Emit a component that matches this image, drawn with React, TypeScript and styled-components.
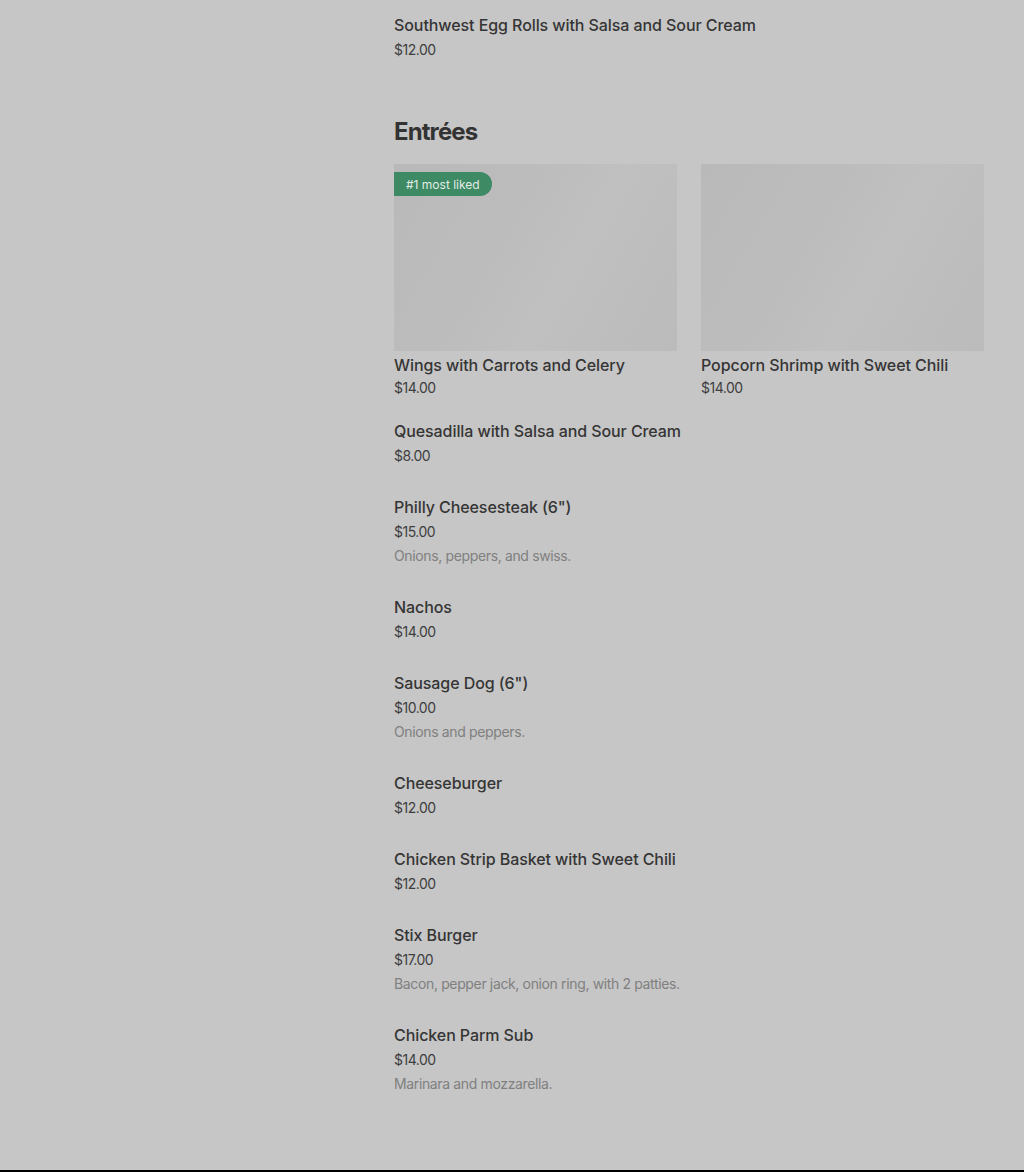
import styled, { createGlobalStyle } from "styled-components"

const GlobalStyle = createGlobalStyle`
	html, body {
		margin: 0;
		padding: 0;
		background: #c6c6c6;
	}
	body {
		font-family: Inter, "Noto Sans", sans-serif;
		color: #353535;
	}
	* {
		box-sizing: border-box;
	}
`

interface MenuItem {
	name: string
	price: string
	description?: string
}

interface FeaturedItem {
	name: string
	price: string
	badge?: string
}

const featured: FeaturedItem[] = [
	{ name: "Wings with Carrots and Celery", price: "$14.00", badge: "#1 most liked" },
	{ name: "Popcorn Shrimp with Sweet Chili", price: "$14.00" },
]

const entrees: MenuItem[] = [
	{ name: "Quesadilla with Salsa and Sour Cream", price: "$8.00" },
	{
		name: 'Philly Cheesesteak (6")',
		price: "$15.00",
		description: "Onions, peppers, and swiss.",
	},
	{ name: "Nachos", price: "$14.00" },
	{
		name: 'Sausage Dog (6")',
		price: "$10.00",
		description: "Onions and peppers.",
	},
	{ name: "Cheeseburger", price: "$12.00" },
	{ name: "Chicken Strip Basket with Sweet Chili", price: "$12.00" },
	{
		name: "Stix Burger",
		price: "$17.00",
		description: "Bacon, pepper jack, onion ring, with 2 patties.",
	},
	{
		name: "Chicken Parm Sub",
		price: "$14.00",
		description: "Marinara and mozzarella.",
	},
]

const App = () => {
	return (
		<>
			<GlobalStyle />
			<Page>
				<Sidebar />
				<Menu>
					<Item>
						<ItemName>Southwest Egg Rolls with Salsa and Sour Cream</ItemName>
						<ItemPrice>$12.00</ItemPrice>
					</Item>

					<Section>
						<SectionTitle>Entrées</SectionTitle>
						<CardGrid>
							{featured.map((item) => (
								<Card key={item.name}>
									<CardImage>
										{item.badge && <Badge>{item.badge}</Badge>}
									</CardImage>
									<CardName>{item.name}</CardName>
									<CardPrice>{item.price}</CardPrice>
								</Card>
							))}
						</CardGrid>
						<ItemList>
							{entrees.map((item) => (
								<Item key={item.name}>
									<ItemName>{item.name}</ItemName>
									<ItemPrice>{item.price}</ItemPrice>
									{item.description && (
										<ItemDescription>{item.description}</ItemDescription>
									)}
								</Item>
							))}
						</ItemList>
					</Section>
				</Menu>
			</Page>
			<Footer />
		</>
	)
}

export default App

const Page = styled.main`
	display: grid;
	grid-template-columns: 330px 590px;
	column-gap: 24px;
	padding: 13px 40px 76px;
`

const Sidebar = styled.aside``

const Menu = styled.div`
	display: flex;
	flex-direction: column;
`

const Section = styled.section`
	margin-top: 56px;
`

const SectionTitle = styled.h2`
	margin: 0 0 16px;
	font-size: 24px;
	line-height: 32px;
	font-weight: 700;
	letter-spacing: -0.9px;
	color: #333;
`

const CardGrid = styled.div`
	display: grid;
	grid-template-columns: 1fr 1fr;
	column-gap: 24px;
`

const Card = styled.div`
	display: flex;
	flex-direction: column;
`

const CardImage = styled.div`
	position: relative;
	height: 187px;
	background: linear-gradient(
		120deg,
		#b9b9b9 0%,
		#bcbcbc 35%,
		#c0c0c0 60%,
		#bbbbbb 100%
	);
`

const Badge = styled.span`
	position: absolute;
	top: 8px;
	left: 0;
	height: 24px;
	padding: 0 12px;
	display: flex;
	align-items: center;
	background: #3e8a64;
	border-radius: 0 12px 12px 0;
	color: #e2ece6;
	font-size: 12px;
	font-weight: 400;
`

const CardName = styled.div`
	margin-top: 2px;
	font-size: 16px;
	line-height: 24px;
	font-weight: 500;
	letter-spacing: -0.08px;
	color: #353535;
`

const CardPrice = styled.div`
	margin-top: 1px;
	font-size: 14px;
	line-height: 20px;
	letter-spacing: -0.5px;
	color: #3e3e3e;
`

const ItemList = styled.div`
	display: flex;
	flex-direction: column;
	gap: 29px;
	margin-top: 21px;
`

const Item = styled.div`
	display: flex;
	flex-direction: column;
`

const ItemName = styled.div`
	font-size: 16px;
	line-height: 24px;
	font-weight: 500;
	letter-spacing: -0.08px;
	color: #353535;
`

const ItemPrice = styled.div`
	margin-top: 3px;
	font-size: 14px;
	line-height: 20px;
	letter-spacing: -0.5px;
	color: #3e3e3e;
`

const ItemDescription = styled.div`
	margin-top: 4px;
	font-size: 14px;
	line-height: 20px;
	letter-spacing: -0.36px;
	color: #808080;
`

const Footer = styled.footer`
	height: 40px;
	background: #000;
`
